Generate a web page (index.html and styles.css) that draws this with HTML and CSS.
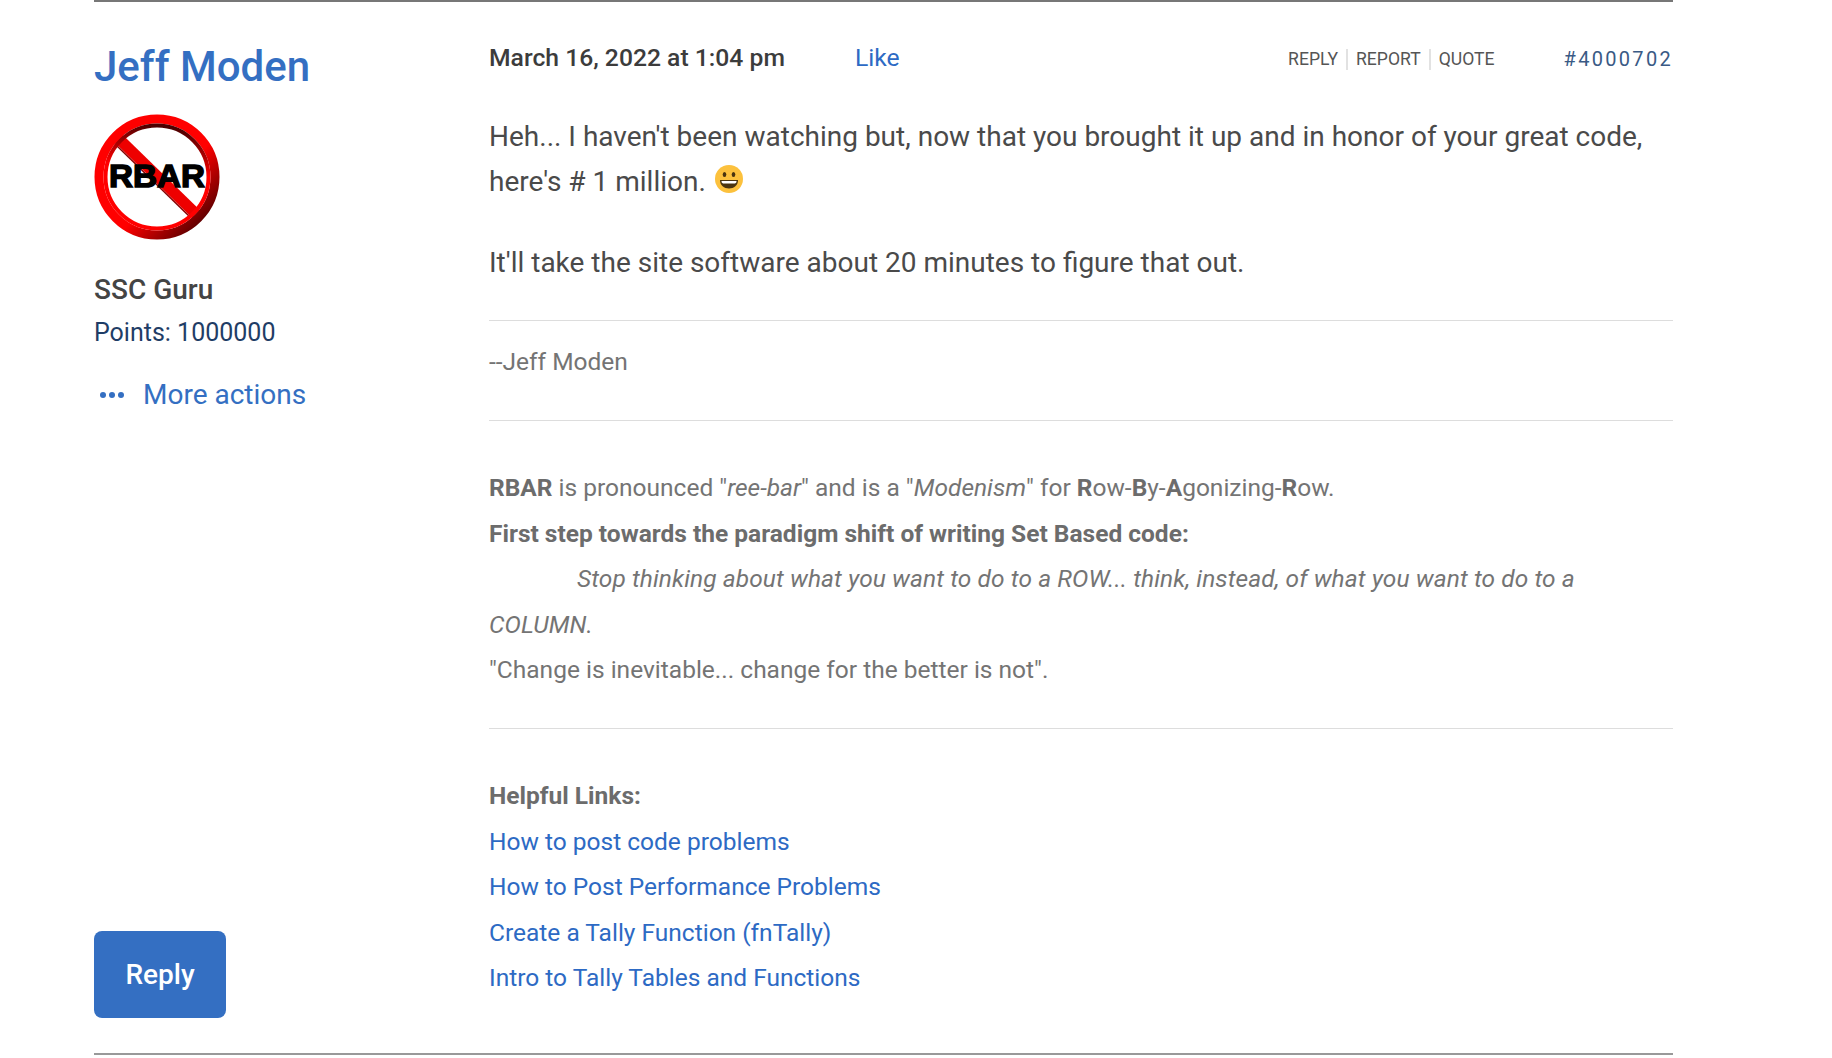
FILE: index.html

```html
<!DOCTYPE html>
<html lang="en">
<head>
  <meta charset="UTF-8">
  <title>Jeff Moden - post</title>
  <link rel="stylesheet" href="styles.css">
</head>
<body>

<div class="post">
  <div class="author">
    <div class="author-top">
      <a class="author-name">Jeff Moden</a>
      <svg class="avatar" viewBox="0 0 126 126">
        <defs>
          <linearGradient id="ringShade" x1="0.1" y1="0.1" x2="0.9" y2="0.9">
            <stop offset="0" stop-color="#f00"/>
            <stop offset="0.6" stop-color="#f00"/>
            <stop offset="1" stop-color="#5a0000"/>
          </linearGradient>
          <linearGradient id="innerShade" x1="0.5" y1="0" x2="0.4" y2="0.7">
            <stop offset="0" stop-color="#4a0000"/>
            <stop offset="0.6" stop-color="#f00"/>
            <stop offset="1" stop-color="#f00"/>
          </linearGradient>
        </defs>
        <circle cx="63" cy="63" r="56" fill="#fff"/>
        <path d="M24,24 L102,100" stroke="#ee0000" stroke-width="11"/>
        <path d="M20,29 L96,103" stroke="#8a0000" stroke-width="1.5"/>
        <text class="avatar-text" x="63" y="73" text-anchor="middle" textLength="96" lengthAdjust="spacingAndGlyphs">RBAR</text>
        <circle cx="63" cy="63" r="58" fill="none" stroke="url(#ringShade)" stroke-width="9"/>
        <circle cx="63" cy="63" r="51.5" fill="none" stroke="url(#innerShade)" stroke-width="4"/>
      </svg>
      <div class="author-rank">SSC Guru</div>
      <div class="author-points">Points: 1000000</div>
      <a class="more-actions">
        <span class="dots"><i></i><i></i><i></i></span>
        More actions
      </a>
    </div>
    <button class="reply-btn">Reply</button>
  </div>

  <div class="content">
    <div class="meta">
      <div class="meta-left">
        <span class="post-date">March 16, 2022 at 1:04 pm</span>
        <a class="like">Like</a>
      </div>
      <div class="meta-right">
        <a class="action">REPLY</a>
        <a class="action">REPORT</a>
        <a class="action">QUOTE</a>
        <span class="post-id">#4000702</span>
      </div>
    </div>

    <div class="message">
      <p>Heh... I haven't been watching but, now that you brought it up and in honor of your great code, here's # 1 million.
        <svg class="smiley" viewBox="0 0 28 28">
          <circle cx="14" cy="14" r="14" fill="#fcc13d"/>
          <ellipse cx="9.5" cy="9.5" rx="1.8" ry="2.6" fill="#4a3410"/>
          <ellipse cx="18.5" cy="9.5" rx="1.8" ry="2.6" fill="#4a3410"/>
          <path d="M5,15 H23 C23,20.5 19,23.5 14,23.5 C9,23.5 5,20.5 5,15 Z" fill="#4a3410"/>
          <path d="M6.5,16 H21.5 C21.5,17.5 21,18 20,18.5 H8 C7,18 6.5,17.5 6.5,16 Z" fill="#fff"/>
        </svg>
      </p>
      <p>It'll take the site software about 20 minutes to figure that out.</p>
    </div>

    <div class="signature">
      <div class="sig-block sig-name">--Jeff Moden</div>
      <div class="sig-block">
        <b>RBAR</b> is pronounced "<em>ree-bar</em>" and is a "<em>Modenism</em>" for <b>R</b>ow-<b>B</b>y-<b>A</b>gonizing-<b>R</b>ow.<br>
        <b>First step towards the paradigm shift of writing Set Based code:</b><br>
        <em class="indent">Stop thinking about what you want to do to a ROW... think, instead, of what you want to do to a COLUMN.</em><br>
        "Change is inevitable... change for the better is not".
      </div>
      <div class="sig-block">
        <b>Helpful Links:</b><br>
        <a>How to post code problems</a><br>
        <a>How to Post Performance Problems</a><br>
        <a>Create a Tally Function (fnTally)</a><br>
        <a>Intro to Tally Tables and Functions</a>
      </div>
    </div>
  </div>
</div>

</body>
</html>
```

FILE: styles.css

```css
* { box-sizing: border-box; margin: 0; padding: 0; }
html, body { width: 100%; height: 100%; }
body {
  background: #fff; font-family: Roboto, sans-serif; color: #3c3c3c;
  overflow: hidden;
}
a { color: #2d6ac4; text-decoration: none; }

.post {
  display: flex;
  width: 1579px; height: 1055px;
  margin-left: 94px;
  border-top: 2px solid #777;
  border-bottom: 2px solid #999;
  padding-top: 37px;
}

.author {
  width: 395px; flex: none;
  display: flex; flex-direction: column; justify-content: space-between;
  padding-bottom: 35px;
}
.author-top { display: flex; flex-direction: column; align-items: flex-start; }
.author-name {
  font-size: 42px; font-weight: 500; line-height: 55px; color: #346fc2;
}
.avatar { width: 126px; height: 126px; margin-top: 20px; }
.avatar-text {
  font-family: "Liberation Sans", sans-serif; font-weight: bold; font-size: 31px;
  fill: #000; stroke: #000; stroke-width: 1.4;
}
.author-rank {
  font-size: 28px; font-weight: 500; line-height: 36px; margin-top: 32px; color: #444;
}
.author-points {
  font-size: 25px; line-height: 36px; margin-top: 7px; color: #1f3d66;
}
.more-actions {
  display: flex; align-items: center;
  font-size: 28px; line-height: 40px; margin-top: 24px; color: #346fc2;
}
.dots { display: flex; gap: 3px; width: 49px; padding-left: 6px; }
.dots i { width: 6px; height: 6px; border-radius: 50%; background: #346fc2; }

.reply-btn {
  width: 132px; height: 87px;
  background: #346fc2; color: #fff; border: none; border-radius: 8px;
  font-family: Roboto, sans-serif; font-size: 28px; font-weight: 500;
}

.content { flex: 1; min-width: 0; }

.meta { display: flex; justify-content: space-between; align-items: center; height: 40px; }
.meta-left { display: flex; align-items: center; gap: 70px; font-size: 24.7px; position: relative; top: -2px; }
.post-date { font-weight: 500; color: #3c3c3c; }
.like { color: #2d6ac4; }
.meta-right { display: flex; align-items: center; }
.action {
  font-size: 17.6px; line-height: 21px; color: #555;
  padding: 0 8px; border-left: 2px solid #e2e2e2;
}
.action:first-child { border-left: none; }
.post-id {
  margin-left: 61px;
  font-size: 20px; letter-spacing: 2.3px; color: #3a5a85;
}

.message {
  margin-top: 35px;
  font-size: 28px; line-height: 45px; color: #4a4a4a;
  padding-bottom: 35px;
}
.message p { margin-bottom: 36px; }
.message p:last-child { margin-bottom: 0; }
.smiley { width: 28px; height: 28px; vertical-align: -2px; margin-left: 2px; }

.signature { font-size: 24.5px; line-height: 45.4px; color: #747474; }
.signature a { color: #2d6ac4; }
.signature b { color: #6c6c6c; }
.sig-block { border-top: 1px solid #ddd; padding: 44px 0 36px; }
.sig-name { padding: 18px 0 36px; }
.indent { padding-left: 88px; letter-spacing: 0.08px; }
```
